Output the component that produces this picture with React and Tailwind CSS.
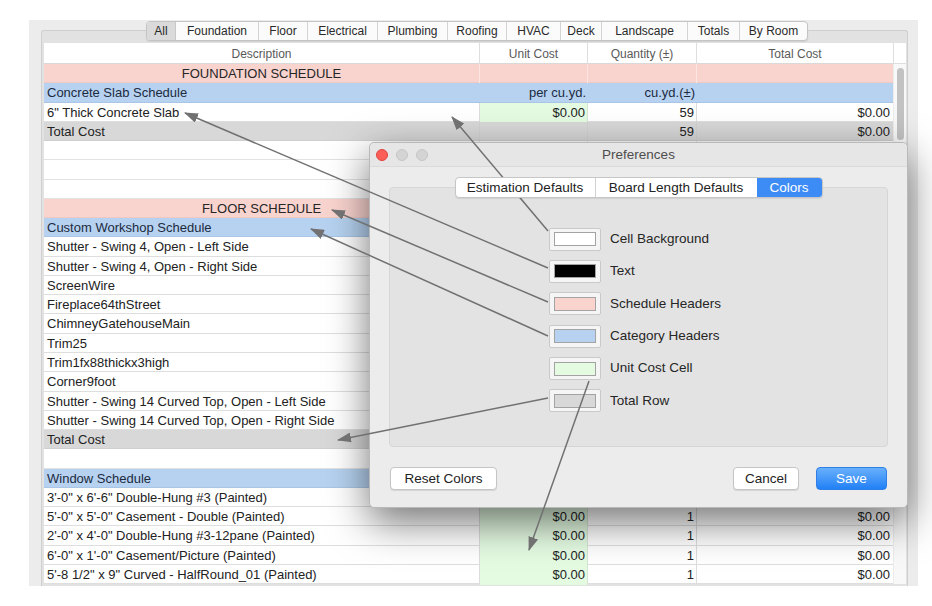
import React from 'react';

const TABS = [
  ['All', 30],
  ['Foundation', 83],
  ['Floor', 49],
  ['Electrical', 70],
  ['Plumbing', 70],
  ['Roofing', 59],
  ['HVAC', 54],
  ['Deck', 41],
  ['Landscape', 86],
  ['Totals', 52],
  ['By Room', 67],
];

const FLOOR_ITEMS = [
  'Shutter - Swing 4, Open - Left Side',
  'Shutter - Swing 4, Open - Right Side',
  'ScreenWire',
  'Fireplace64thStreet',
  'ChimneyGatehouseMain',
  'Trim25',
  'Trim1fx88thickx3high',
  'Corner9foot',
  'Shutter - Swing 14 Curved Top, Open - Left Side',
  'Shutter - Swing 14 Curved Top, Open - Right Side',
];

const WINDOW_ITEMS = [
  '3\'-0" x 6\'-6" Double-Hung #3 (Painted)',
  '5\'-0" x 5\'-0" Casement - Double (Painted)',
  '2\'-0" x 4\'-0" Double-Hung #3-12pane (Painted)',
  '6\'-0" x 1\'-0" Casement/Picture (Painted)',
  '5\'-8 1/2" x 9" Curved - HalfRound_01 (Painted)',
];

// rows under the dialog keep their cells, the figures there are not visible
const ROWS = [
  { t: 'sched', d: 'FOUNDATION SCHEDULE' },
  { t: 'cat', d: 'Concrete Slab Schedule', u: 'per cu.yd.', q: 'cu.yd.(±)' },
  { t: 'item', d: '6" Thick Concrete Slab', u: '$0.00', q: '59', c: '$0.00' },
  { t: 'total', d: 'Total Cost', q: '59', c: '$0.00' },
  { t: 'empty' },
  { t: 'empty' },
  { t: 'empty' },
  { t: 'sched', d: 'FLOOR SCHEDULE' },
  { t: 'cat', d: 'Custom Workshop Schedule' },
  ...FLOOR_ITEMS.map((d) => ({ t: 'item', d })),
  { t: 'total', d: 'Total Cost' },
  { t: 'empty' },
  { t: 'cat', d: 'Window Schedule' },
  ...WINDOW_ITEMS.map((d, i) => (i === 0 ? { t: 'item', d } : { t: 'item', d, u: '$0.00', q: '1', c: '$0.00' })),
];

const SWATCHES = [
  ['Cell Background', 'bg-white'],
  ['Text', 'bg-black'],
  ['Schedule Headers', 'bg-[#f9d3ce]'],
  ['Category Headers', 'bg-[#b6d2f0]'],
  ['Unit Cost Cell', 'bg-[#e4fbe2]'],
  ['Total Row', 'bg-[#d8d8d8]'],
];

// annotation arrows: [fromX, fromY, tipX, tipY]
const ARROWS = [
  [548, 268, 185, 113],
  [548, 231, 452, 117],
  [548, 302, 332, 210],
  [548, 336, 311, 229],
  [548, 398, 338, 440],
  [589, 381, 529, 550],
];

function Row({ r }) {
  const base = 'grid grid-cols-[436px_108px_109px_196px] h-[19.27px] text-[13px] leading-[20px] border-b';

  if (r.t === 'sched') {
    return (
      <div className={`${base} bg-[#f9d3ce] border-[#efc9c4] text-[#262626]`}>
        <div className="text-center border-r border-[#fbe4e1]">{r.d}</div>
        <div className="border-r border-[#fbe4e1]" />
        <div className="border-r border-[#fbe4e1]" />
        <div />
      </div>
    );
  }
  if (r.t === 'cat') {
    return (
      <div className={`${base} bg-[#b6d2f0] border-[#a9c6e6] text-[#1c2a40]`}>
        <div className="pl-[3px]">{r.d}</div>
        <div className="text-right pr-[2px]">{r.u}</div>
        <div className="text-right pr-[2px]">{r.q}</div>
        <div />
      </div>
    );
  }
  if (r.t === 'item') {
    return (
      <div className={`${base} bg-white border-[#dedede] text-[#222]`}>
        <div className="pl-[3px] border-r border-[#dcdcdc] whitespace-nowrap">{r.d}</div>
        <div className="bg-[#e4fbe2] text-right pr-[2px] border-r border-[#d6e6d4]">{r.u}</div>
        <div className="text-right pr-[2px] border-r border-[#dcdcdc]">{r.q}</div>
        <div className="text-right pr-[3px]">{r.c}</div>
      </div>
    );
  }
  if (r.t === 'total') {
    return (
      <div className={`${base} bg-[#d8d8d8] border-[#cfcfcf] text-[#222]`}>
        <div className="pl-[3px] border-r border-[#d2d2d2]">{r.d}</div>
        <div className="border-r border-[#d2d2d2]" />
        <div className="text-right pr-[2px] border-r border-[#d2d2d2]">{r.q}</div>
        <div className="text-right pr-[3px]">{r.c}</div>
      </div>
    );
  }
  return (
    <div className={`${base} bg-white border-[#e2e2e2]`}>
      <div className="border-r border-[#e2e2e2]" />
      <div className="border-r border-[#e2e2e2]" />
      <div className="border-r border-[#e2e2e2]" />
      <div />
    </div>
  );
}

function TabBar() {
  return (
    <div className="relative z-10 mt-[1px] ml-[117px] flex h-[20px] w-fit rounded-[4px] border border-[#c4c4c4] bg-[#fbfbfb] shadow-[0_1px_1px_rgba(0,0,0,0.08)] text-[12px] text-[#2a2a2a]">
      {TABS.map(([name, w], i) => (
        <div
          key={name}
          style={{ width: w - (i === 0 ? 1 : 0) }}
          className={
            i === 0
              ? 'flex items-center justify-center rounded-l-[3px] bg-[#dadada] border-r border-[#c8c8c8]'
              : i === TABS.length - 1
              ? 'flex items-center justify-center'
              : 'flex items-center justify-center border-r border-[#d4d4d4]'
          }
        >
          {name}
        </div>
      ))}
    </div>
  );
}

function Table() {
  return (
    <div className="flex w-[862px] bg-white">
      <div className="w-[849px] flex flex-col">
        <div className="grid grid-cols-[436px_108px_109px_196px] h-[21px] border-b border-[#d9d9d9] text-[12px] leading-[22px] text-[#595959]">
          <div className="text-center border-r border-[#dedede]">Description</div>
          <div className="text-center border-r border-[#dedede]">Unit Cost</div>
          <div className="text-center border-r border-[#dedede]">Quantity (±)</div>
          <div className="text-center">Total Cost</div>
        </div>
        {ROWS.map((r, i) => (
          <Row key={i} r={r} />
        ))}
      </div>
      <div className="w-[13px] flex flex-col">
        <div className="h-[21px] border-b border-l border-[#dedede] bg-white" />
        <div className="flex-1 bg-[#f8f8f8] border-l border-[#ececec] flex flex-col items-center">
          <div className="mt-[4px] h-[72px] w-[7px] rounded-full bg-[#c2c2c2]" />
        </div>
      </div>
    </div>
  );
}

function Preferences() {
  return (
    <div className="absolute left-[369px] top-[142px] w-[539px] h-[366px] flex flex-col bg-[#ececec] border border-[#b9b9b9] rounded-[5px] shadow-[0_14px_40px_rgba(0,0,0,0.55)]">
      <div className="relative h-[24px] flex items-center rounded-t-[5px] bg-[#e6e6e6] border-b border-[#dadada]">
        <div className="flex items-center gap-[8px] pl-[6px]">
          <div className="h-[12px] w-[12px] rounded-full bg-[#fc5f57] border border-[#e0443e]" />
          <div className="h-[12px] w-[12px] rounded-full bg-[#d4d4d4] border border-[#c6c6c6]" />
          <div className="h-[12px] w-[12px] rounded-full bg-[#d4d4d4] border border-[#c6c6c6]" />
        </div>
        <div className="flex-1 text-center pr-[58px] pt-[2px] text-[13.5px] text-[#4d4d4d]">Preferences</div>
      </div>

      <div className="relative z-10 mt-[10px] flex justify-center">
        <div className="flex h-[21px] rounded-[4px] border border-[#c6c6c6] bg-white text-[13.5px] text-[#222] shadow-[0_1px_1px_rgba(0,0,0,0.08)]">
          <div className="w-[140px] flex items-center justify-center pt-[1px] border-r border-[#d2d2d2]">Estimation Defaults</div>
          <div className="w-[161px] flex items-center justify-center pt-[1px]">Board Length Defaults</div>
          <div className="w-[65px] flex items-center justify-center pt-[1px] rounded-r-[3px] bg-[#3d8cf6] text-white">Colors</div>
        </div>
      </div>

      <div className="-mt-[11px] mx-[19px] h-[260px] rounded-[4px] border border-[#d6d6d6] bg-[#e3e3e3] pt-[40px] pl-[159px] flex flex-col gap-[10.4px]">
        {SWATCHES.map(([label, color]) => (
          <div key={label} className="flex items-center gap-[9px] h-[22px]">
            <div className="w-[52px] h-[23px] rounded-[2px] border border-[#c9c9c9] bg-[#f5f5f5] flex items-center justify-center">
              <div className={`w-[42px] h-[14px] border border-[#a3a3a3] ${color}`} />
            </div>
            <div className="text-[13.5px] text-[#262626]">{label}</div>
          </div>
        ))}
      </div>

      <div className="mt-[20px] flex items-center px-[20px] text-[13.5px] text-[#222]">
        <div className="w-[107px] h-[23px] flex items-center justify-center pt-[1px] rounded-[4px] border border-[#c5c5c5] bg-white shadow-[0_1px_1px_rgba(0,0,0,0.1)]">
          Reset Colors
        </div>
        <div className="flex-1" />
        <div className="w-[66px] h-[23px] flex items-center justify-center pt-[1px] rounded-[4px] border border-[#c5c5c5] bg-white shadow-[0_1px_1px_rgba(0,0,0,0.1)]">
          Cancel
        </div>
        <div className="ml-[17px] w-[71px] h-[23px] flex items-center justify-center pt-[1px] rounded-[4px] border border-[#2f7fe8] bg-gradient-to-b from-[#67b0fb] to-[#1f80f6] text-white">
          Save
        </div>
      </div>
    </div>
  );
}

function Arrows() {
  return (
    <svg className="absolute inset-0 pointer-events-none" width="932" height="606">
      <defs>
        <marker
          id="ah"
          viewBox="0 0 14 10"
          refX="13"
          refY="5"
          markerWidth="14"
          markerHeight="10"
          markerUnits="userSpaceOnUse"
          orient="auto"
        >
          <path d="M0,0 L14,5 L0,10 z" fill="#717171" />
        </marker>
      </defs>
      {ARROWS.map(([x1, y1, x2, y2], i) => (
        <line key={i} x1={x1} y1={y1} x2={x2} y2={y2} stroke="#717171" strokeWidth="1.5" markerEnd="url(#ah)" />
      ))}
    </svg>
  );
}

export default function App() {
  return (
    <div className="relative w-[932px] h-[606px] overflow-hidden bg-white font-['Liberation_Sans',Arial,sans-serif] text-[#222]">
      <div className="ml-[29px] mt-[20px] w-[889px] h-[566px] bg-[#ececec] flex flex-col">
        <TabBar />
        <div className="-mt-[11px] ml-[12px] w-[867px] flex-1 overflow-hidden rounded-t-[3px] border-x border-t border-[#cfcfcf] bg-[#e2e2e2] pt-[12px] pl-[2px]">
          <Table />
        </div>
      </div>
      <Preferences />
      <Arrows />
    </div>
  );
}
